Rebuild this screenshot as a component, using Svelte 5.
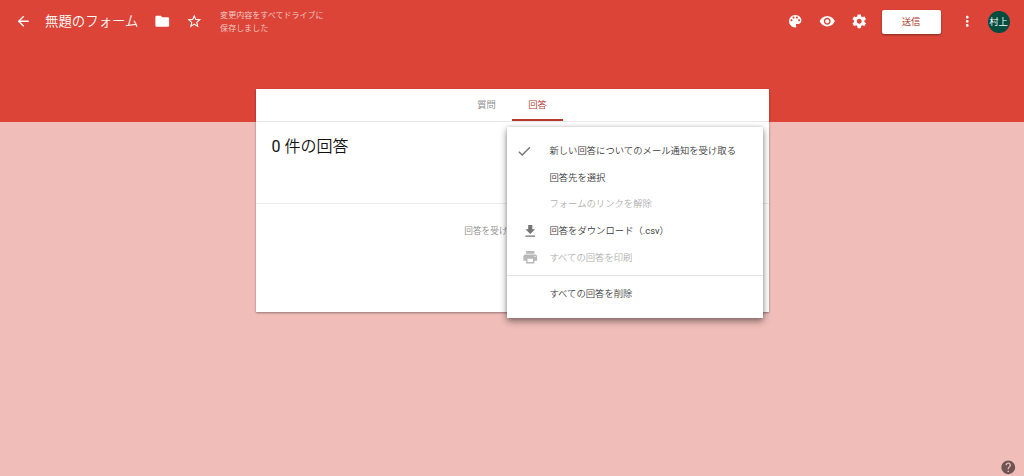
<script>
  const menu = [
    { label: '新しい回答についてのメール通知を受け取る', icon: 'check' },
    { label: '回答先を選択' },
    { label: 'フォームのリンクを解除', disabled: true },
    { label: '回答をダウンロード（', ext: '.csv', tail: '）', icon: 'download' },
    { label: 'すべての回答を印刷', icon: 'print', disabled: true }
  ];
  const paths = {
    back: 'M20 11H7.83l5.59-5.59L12 4l-8 8 8 8 1.41-1.41L7.83 13H20v-2z',
    folder: 'M10 4H4c-1.1 0-1.99.9-1.99 2L2 18c0 1.1.9 2 2 2h16c1.1 0 2-.9 2-2V8c0-1.1-.9-2-2-2h-8l-2-2z',
    star: 'M22 9.24l-7.19-.62L12 2 9.19 8.63 2 9.24l5.46 4.73L5.82 21 12 17.27 18.18 21l-1.63-7.03L22 9.24zM12 15.4l-3.76 2.27 1-4.28-3.32-2.88 4.38-.38L12 6.1l1.71 4.04 4.38.38-3.32 2.88 1 4.28L12 15.4z',
    palette: 'M12 3c-4.97 0-9 4.03-9 9s4.03 9 9 9c.83 0 1.5-.67 1.5-1.5 0-.39-.15-.74-.39-1.01-.23-.26-.38-.61-.38-.99 0-.83.67-1.5 1.5-1.5H16c2.76 0 5-2.24 5-5 0-4.42-4.03-8-9-8zm-5.5 9c-.83 0-1.5-.67-1.5-1.5S5.67 9 6.5 9 8 9.67 8 10.5 7.33 12 6.5 12zm3-4C8.67 8 8 7.33 8 6.5S8.67 5 9.5 5s1.5.67 1.5 1.5S10.33 8 9.5 8zm5 0c-.83 0-1.5-.67-1.5-1.5S13.67 5 14.5 5s1.5.67 1.5 1.5S15.33 8 14.5 8zm3 4c-.83 0-1.5-.67-1.5-1.5S16.67 9 17.5 9s1.5.67 1.5 1.5-.67 1.5-1.5 1.5z',
    eye: 'M12 4.5C7 4.5 2.73 7.61 1 12c1.73 4.39 6 7.5 11 7.5s9.27-3.11 11-7.5c-1.73-4.39-6-7.5-11-7.5zM12 17c-2.76 0-5-2.24-5-5s2.24-5 5-5 5 2.24 5 5-2.24 5-5 5zm0-8c-1.66 0-3 1.34-3 3s1.34 3 3 3 3-1.34 3-3-1.34-3-3-3z',
    gear: 'M19.43 12.98c.04-.32.07-.64.07-.98s-.03-.66-.07-.98l2.11-1.65c.19-.15.24-.42.12-.64l-2-3.46c-.12-.22-.39-.3-.61-.22l-2.49 1c-.52-.4-1.08-.73-1.69-.98l-.38-2.65C14.46 2.18 14.25 2 14 2h-4c-.25 0-.46.18-.49.42l-.38 2.65c-.61.25-1.17.59-1.69.98l-2.49-1c-.23-.09-.49 0-.61.22l-2 3.46c-.13.22-.07.49.12.64l2.11 1.65c-.04.32-.07.65-.07.98s.03.66.07.98l-2.11 1.65c-.19.15-.24.42-.12.64l2 3.46c.12.22.39.3.61.22l2.49-1c.52.4 1.08.73 1.69.98l.38 2.65c.03.24.24.42.49.42h4c.25 0 .46-.18.49-.42l.38-2.65c.61-.25 1.17-.59 1.69-.98l2.49 1c.23.09.49 0 .61-.22l2-3.46c.12-.22.07-.49-.12-.64l-2.11-1.65zM12 15.5c-1.93 0-3.5-1.57-3.5-3.5s1.57-3.5 3.5-3.5 3.5 1.57 3.5 3.5-1.57 3.5-3.5 3.5z',
    more: 'M12 8c1.1 0 2-.9 2-2s-.9-2-2-2-2 .9-2 2 .9 2 2 2zm0 2c-1.1 0-2 .9-2 2s.9 2 2 2 2-.9 2-2-.9-2-2-2zm0 6c-1.1 0-2 .9-2 2s.9 2 2 2 2-.9 2-2-.9-2-2-2z',
    check: 'M9 16.17L4.83 12l-1.42 1.41L9 19 21 7l-1.41-1.41z',
    download: 'M19 9h-4V3H9v6H5l7 7 7-7zM5 18v2h14v-2H5z',
    print: 'M19 8H5c-1.66 0-3 1.34-3 3v6h4v4h12v-4h4v-6c0-1.66-1.34-3-3-3zm-3 11H8v-5h8v5zm3-7c-.55 0-1-.45-1-1s.45-1 1-1 1 .45 1 1-.45 1-1 1zm-1-9H6v4h12V3z',
    help: 'M12 2C6.48 2 2 6.48 2 12s4.48 10 10 10 10-4.48 10-10S17.52 2 12 2zm1 17h-2v-2h2v2zm2.07-7.75l-.9.92C13.45 12.9 13 13.5 13 15h-2v-.5c0-1.1.45-2.1 1.17-2.83l1.24-1.26c.37-.36.59-.86.59-1.41 0-1.1-.9-2-2-2s-2 .9-2 2H8c0-2.21 1.79-4 4-4s4 1.79 4 4c0 .88-.36 1.68-.93 2.25z'
  };
</script>

{#snippet icon(name)}
  <svg class="icon {name}" viewBox="0 0 24 24"><path d={paths[name]} /></svg>
{/snippet}

<div class="page">
  <header>
    <div class="bar">
      {@render icon('back')}
      <h1>無題のフォーム</h1>
      {@render icon('folder')}
      {@render icon('star')}
      <p class="saved">変更内容をすべてドライブに<br />保存しました</p>
      <div class="actions">
        {@render icon('palette')}
        {@render icon('eye')}
        {@render icon('gear')}
        <button class="send">送信</button>
        {@render icon('more')}
        <span class="avatar">村上</span>
      </div>
    </div>
  </header>

  <main>
    <nav>
      <span class="tab">質問</span>
      <span class="tab active">回答</span>
    </nav>
    <section class="summary"><h2><span class="latin">0</span> 件の回答</h2></section>
    <section class="status">回答を受け付けています</section>

    <div class="menu">
      {#each menu as item}
        <div class="item" class:disabled={item.disabled}>
          <span class="slot">{#if item.icon}{@render icon(item.icon)}{/if}</span>
          <span class="label">{item.label}{#if item.ext}<span class="latin">{item.ext}</span>{item.tail}{/if}</span>
        </div>
      {/each}
      <div class="rule"></div>
      <div class="item"><span class="slot"></span><span class="label">すべての回答を削除</span></div>
    </div>
  </main>

  <div class="help-corner">{@render icon('help')}</div>
</div>

<style>
  :global(body) { margin: 0; }
  .page {
    position: relative;
    height: 476px;
    overflow: hidden;
    background: #f0bdb9;
    font-family: Roboto, 'Noto Sans CJK JP', sans-serif;
    font-size: 9.36px;
    font-weight: 350;
  }
  .latin { font-weight: 400; }
  header { height: 121.5px; background: #db4437; color: #fff; }
  .bar { display: flex; align-items: center; height: 43px; padding: 0 14.4px 0 14.6px; }
  .icon { display: block; flex: none; width: 16.5px; height: 16.5px; fill: currentColor; }
  h1 { width: 94px; margin: 0 14.5px 0 14px; font-size: 13.4px; font-weight: 350; line-height: 20px; white-space: nowrap; }
  .star { margin-left: 15.5px; }
  .saved { margin: 2px 0 0 18px; font-size: 8.04px; line-height: 12.6px; color: rgba(255, 255, 255, 0.76); white-space: nowrap; }
  .actions { display: flex; align-items: center; margin-left: auto; }
  .eye, .gear { margin-left: 15.5px; }
  .send {
    width: 59px; height: 24px; margin: 0 18px 0 14.5px; padding: 0 0 2px;
    border: 0; border-radius: 2px; background: #fff; color: #a52714;
    font: inherit; box-shadow: 0 1px 2px rgba(0, 0, 0, 0.4);
  }
  .avatar {
    width: 22px; height: 22px; margin-left: 12.5px; border-radius: 50%;
    background: #004d40; text-align: center; line-height: 22px;
  }
  main {
    position: relative;
    width: 513px; height: 222.5px; margin: -32.5px 0 0 255.5px;
    background: #fff;
    box-shadow: 0 1px 2px rgba(0, 0, 0, 0.38);
  }
  nav { display: flex; justify-content: center; height: 32px; border-bottom: 1px solid #e8e8e8; }
  .tab { box-sizing: border-box; width: 51px; height: 32px; text-align: center; line-height: 31px; color: #8a8a8a; }
  .tab.active { color: #b5382f; border-bottom: 2px solid #b5382f; }
  .summary { height: 81px; border-bottom: 1px solid #ebebeb; }
  h2 { margin: 0; padding: 13px 0 0 16px; font-size: 16px; font-weight: 350; line-height: 24px; color: #111; }
  .status { padding-top: 20px; text-align: center; font-size: 8.7px; line-height: 15px; color: #8c8c8c; }
  .menu {
    position: absolute; left: 251.2px; top: 38px; width: 256px; height: 191px; box-sizing: border-box;
    padding-top: 11px; background: #fff; color: #3c3c3c;
    box-shadow: 0 3px 7px rgba(0, 0, 0, 0.48), 0 0 3px rgba(0, 0, 0, 0.12);
  }
  .item { display: flex; align-items: center; height: 26.6px; white-space: nowrap; }
  .label { padding-bottom: 2px; }
  .item.disabled { color: #b0b0b0; }
  .slot { width: 27px; padding-left: 15.7px; color: #757575; }
  .disabled .slot { color: #b8b8b8; }
  .check { margin-left: -6px; }
  .rule { height: 1px; margin: 4.5px 0 4.5px; background: #e4e4e4; }
  .help-corner { position: absolute; right: 8px; bottom: 0.5px; color: #6f5553; }
</style>
